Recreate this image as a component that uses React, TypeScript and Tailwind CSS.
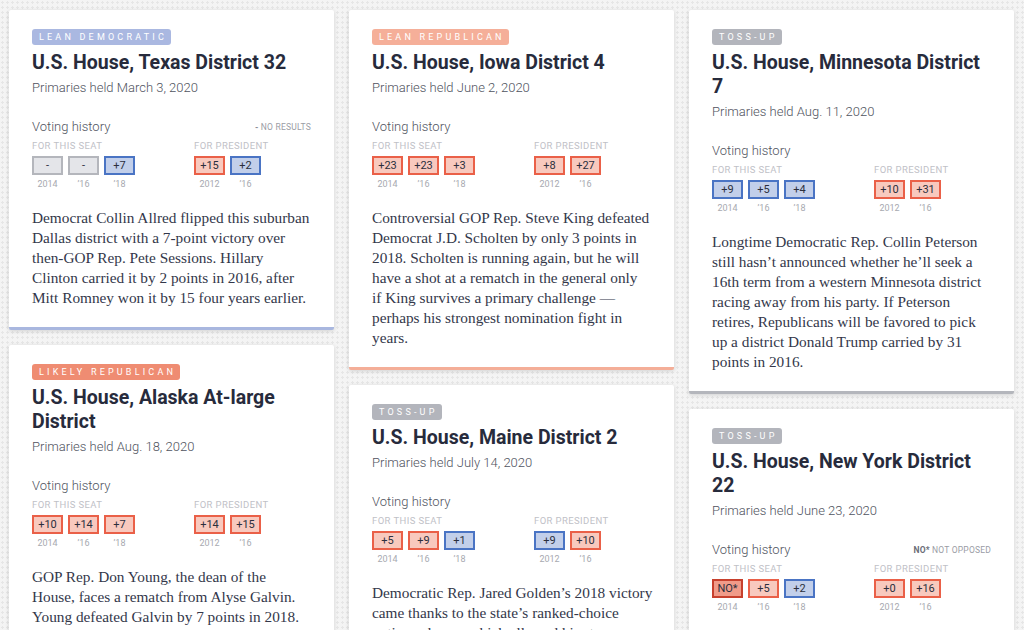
import React from "react";

type Kind = "gray" | "blue" | "red" | "dark";
type Cell = { v: string; k: Kind; y: string };
type CardT = {
  badge: string;
  badgeCls: string;
  borderCls: string;
  title: string;
  date: string;
  note?: React.ReactNode;
  seat: Cell[];
  pres: Cell[];
  lines: string[];
};

const boxCls: Record<Kind, string> = {
  gray: "bg-[#e4e5e9] border-[#b4b6bc]",
  blue: "bg-[#c2cfea] border-[#4a74c4]",
  red: "bg-[#f8c9be] border-[#ea6048]",
  dark: "bg-[#f09b89] border-[#c7402d]",
};

const sans = "font-['Roboto','Liberation_Sans',sans-serif]";
const serif = "font-['Liberation_Serif','DejaVu_Serif',serif]";

const badges = {
  dem: "bg-[#aab8e1]",
  leanRep: "bg-[#f5af99]",
  likelyRep: "bg-[#ef8c72]",
  toss: "bg-[#b3b5bc]",
};

const col1: CardT[] = [
  {
    badge: "Lean Democratic",
    badgeCls: badges.dem,
    borderCls: "border-b-[3px] border-[#a9b7df]",
    title: "U.S. House, Texas District 32",
    date: "Primaries held March 3, 2020",
    note: (
      <span>
        <span className="font-bold text-[#8a8d96]">-</span> NO RESULTS
      </span>
    ),
    seat: [
      { v: "-", k: "gray", y: "2014" },
      { v: "-", k: "gray", y: "’16" },
      { v: "+7", k: "blue", y: "’18" },
    ],
    pres: [
      { v: "+15", k: "red", y: "2012" },
      { v: "+2", k: "blue", y: "’16" },
    ],
    lines: [
      "Democrat Collin Allred flipped this suburban",
      "Dallas district with a 7-point victory over",
      "then-GOP Rep. Pete Sessions. Hillary",
      "Clinton carried it by 2 points in 2016, after",
      "Mitt Romney won it by 15 four years earlier.",
    ],
  },
  {
    badge: "Likely Republican",
    badgeCls: badges.likelyRep,
    borderCls: "",
    title: "U.S. House, Alaska At-large District",
    date: "Primaries held Aug. 18, 2020",
    seat: [
      { v: "+10", k: "red", y: "2014" },
      { v: "+14", k: "red", y: "’16" },
      { v: "+7", k: "red", y: "’18" },
    ],
    pres: [
      { v: "+14", k: "red", y: "2012" },
      { v: "+15", k: "red", y: "’16" },
    ],
    lines: [
      "GOP Rep. Don Young, the dean of the",
      "House, faces a rematch from Alyse Galvin.",
      "Young defeated Galvin by 7 points in 2018.",
    ],
  },
];

const col2: CardT[] = [
  {
    badge: "Lean Republican",
    badgeCls: badges.leanRep,
    borderCls: "border-b-[3px] border-[#f4ae98]",
    title: "U.S. House, Iowa District 4",
    date: "Primaries held June 2, 2020",
    seat: [
      { v: "+23", k: "red", y: "2014" },
      { v: "+23", k: "red", y: "’16" },
      { v: "+3", k: "red", y: "’18" },
    ],
    pres: [
      { v: "+8", k: "red", y: "2012" },
      { v: "+27", k: "red", y: "’16" },
    ],
    lines: [
      "Controversial GOP Rep. Steve King defeated",
      "Democrat J.D. Scholten by only 3 points in",
      "2018. Scholten is running again, but he will",
      "have a shot at a rematch in the general only",
      "if King survives a primary challenge —",
      "perhaps his strongest nomination fight in",
      "years.",
    ],
  },
  {
    badge: "Toss-up",
    badgeCls: badges.toss,
    borderCls: "",
    title: "U.S. House, Maine District 2",
    date: "Primaries held July 14, 2020",
    seat: [
      { v: "+5", k: "red", y: "2014" },
      { v: "+9", k: "red", y: "’16" },
      { v: "+1", k: "blue", y: "’18" },
    ],
    pres: [
      { v: "+9", k: "blue", y: "2012" },
      { v: "+10", k: "red", y: "’16" },
    ],
    lines: [
      "Democratic Rep. Jared Golden’s 2018 victory",
      "came thanks to the state’s ranked-choice",
      "voting scheme, which allowed him to",
    ],
  },
];

const col3: CardT[] = [
  {
    badge: "Toss-up",
    badgeCls: badges.toss,
    borderCls: "border-b-[3px] border-[#b4b6bc]",
    title: "U.S. House, Minnesota District 7",
    date: "Primaries held Aug. 11, 2020",
    seat: [
      { v: "+9", k: "blue", y: "2014" },
      { v: "+5", k: "blue", y: "’16" },
      { v: "+4", k: "blue", y: "’18" },
    ],
    pres: [
      { v: "+10", k: "red", y: "2012" },
      { v: "+31", k: "red", y: "’16" },
    ],
    lines: [
      "Longtime Democratic Rep. Collin Peterson",
      "still hasn’t announced whether he’ll seek a",
      "16th term from a western Minnesota district",
      "racing away from his party. If Peterson",
      "retires, Republicans will be favored to pick",
      "up a district Donald Trump carried by 31",
      "points in 2016.",
    ],
  },
  {
    badge: "Toss-up",
    badgeCls: badges.toss,
    borderCls: "",
    title: "U.S. House, New York District 22",
    date: "Primaries held June 23, 2020",
    note: (
      <span>
        <span className="font-bold text-[#6b6e78]">NO*</span> NOT OPPOSED
      </span>
    ),
    seat: [
      { v: "NO*", k: "dark", y: "2014" },
      { v: "+5", k: "red", y: "’16" },
      { v: "+2", k: "blue", y: "’18" },
    ],
    pres: [
      { v: "+0", k: "red", y: "2012" },
      { v: "+16", k: "red", y: "’16" },
    ],
    lines: [],
  },
];

function Box({ c }: { c: Cell }) {
  return (
    <div className="flex w-[31px] flex-col items-center">
      <div
        className={`flex h-[19px] w-[31px] items-center justify-center border-2 text-[11px] leading-none text-[#2b2f3d] ${boxCls[c.k]}`}
      >
        {c.v}
      </div>
      <div className="mt-[3px] text-[9px] leading-[12px] text-[#a7a9b0]">{c.y}</div>
    </div>
  );
}

function Card({ d }: { d: CardT }) {
  return (
    <div
      className={`rounded-[2px] bg-white px-[23px] pt-[19px] pb-[19px] shadow-[0_1px_4px_rgba(0,0,0,0.14)] ${d.borderCls} ${sans}`}
    >
      <div
        className={`flex h-[16px] w-fit items-center rounded-[3px] pl-[7px] pr-[4px] text-[9px] uppercase leading-none tracking-[3.2px] text-white ${d.badgeCls}`}
      >
        {d.badge}
      </div>
      <h2 className="mt-[6px] text-[19.5px] font-bold leading-[24px] text-[#272b3c]">
        {d.title}
      </h2>
      <div className="mt-[4px] text-[13px] font-light leading-[18px] text-[#4f5360]">
        {d.date}
      </div>
      <div className="mt-[21px] flex items-center justify-between">
        <div className="text-[13px] font-light leading-[18px] text-[#4f5360]">
          Voting history
        </div>
        {d.note && (
          <div className="text-[8.5px] leading-none tracking-[0.2px] text-[#9a9ca4]">{d.note}</div>
        )}
      </div>
      <div className="mt-[4px] flex">
        <div className="w-[162px]">
          <div className="text-[9.5px] uppercase leading-[12px] tracking-[0.4px] text-[#bfc1c7]">
            For this seat
          </div>
          <div className="mt-[4px] flex gap-[5px]">
            {d.seat.map((c, i) => (
              <Box key={i} c={c} />
            ))}
          </div>
        </div>
        <div>
          <div className="text-[9.5px] uppercase leading-[12px] tracking-[0.4px] text-[#bfc1c7]">
            For president
          </div>
          <div className="mt-[4px] flex gap-[5px]">
            {d.pres.map((c, i) => (
              <Box key={i} c={c} />
            ))}
          </div>
        </div>
      </div>
      {d.lines.length > 0 && (
        <p className={`mt-[18px] text-[15.3px] leading-[20px] text-[#33374a] ${serif}`}>
          {d.lines.map((l, i) => (
            <span key={i} className="block whitespace-nowrap">
              {l}
            </span>
          ))}
        </p>
      )}
    </div>
  );
}

function Column({ cards }: { cards: CardT[] }) {
  return (
    <div className="flex flex-col gap-[15px]">
      {cards.map((c, i) => (
        <Card key={i} d={c} />
      ))}
    </div>
  );
}

export default function App() {
  return (
    <div className="h-[630px] overflow-hidden bg-[#f4f4f4] bg-[radial-gradient(circle,#e6e6e6_1px,transparent_1.3px)] bg-[length:5px_5px]">
      <div className="grid grid-cols-3 items-start gap-[15px] pl-[9px] pr-[10px] pt-[10px]">
        <Column cards={col1} />
        <Column cards={col2} />
        <Column cards={col3} />
      </div>
    </div>
  );
}
